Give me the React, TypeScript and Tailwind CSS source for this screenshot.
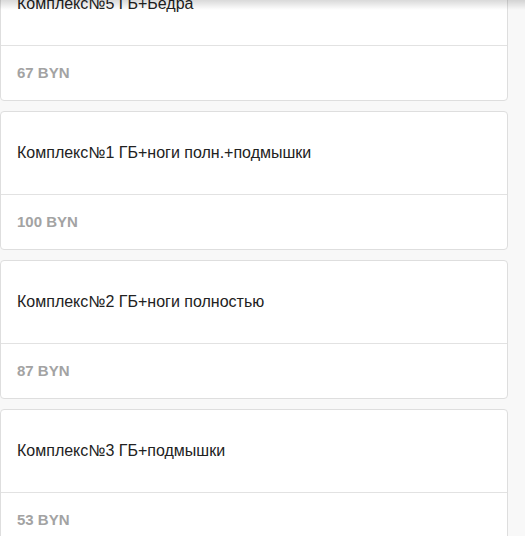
const items = [
  { title: 'Комплекс№5 ГБ+Бедра', price: '67 BYN' },
  { title: 'Комплекс№1 ГБ+ноги полн.+подмышки', price: '100 BYN' },
  { title: 'Комплекс№2 ГБ+ноги полностью', price: '87 BYN' },
  { title: 'Комплекс№3 ГБ+подмышки', price: '53 BYN' },
];

export default function App() {
  return (
    <div className="relative h-[536px] w-[525px] overflow-hidden bg-[#f8f8f8] font-['Liberation_Sans',Arial,sans-serif]">
      {/* тень от шапки */}
      <div className="pointer-events-none absolute inset-x-0 top-0 z-10 h-[10px] bg-gradient-to-b from-black/15 to-transparent" />

      <div className="-mt-[38px] flex w-[508px] flex-col gap-[10px]">
        {items.map((item) => (
          <div
            key={item.title}
            className="rounded-[4px] border border-[#dedede] bg-white"
          >
            <div className="flex h-[83px] items-center border-b border-[#e2e2e2] px-[16px]">
              <p className="text-[16px] text-[#222]">{item.title}</p>
            </div>
            <div className="flex h-[54px] items-center px-[16px]">
              <p className="text-[15px] font-bold text-[#a3a3a3]">{item.price}</p>
            </div>
          </div>
        ))}
      </div>
    </div>
  );
}
